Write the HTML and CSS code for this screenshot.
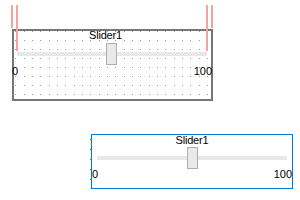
FILE: index.html
```html
<!DOCTYPE html>
<html lang="en">
<head>
    <meta charset="UTF-8">
    <meta name="viewport" content="width=device-width, initial-scale=1.0">
    <title>Slider Designer</title>
    <link rel="stylesheet" href="styles.css">
</head>
<body>
    <div class="surface">
        <!-- snap lines shown while dragging the slider -->
        <span class="snapline snapline-short snap-left-outer"></span>
        <span class="snapline snap-left-inner"></span>
        <span class="snapline snap-right-inner"></span>
        <span class="snapline snapline-short snap-right-outer"></span>

        <div class="slider slider-design">
            <div class="slider-title">Slider1</div>
            <div class="slider-rail">
                <div class="slider-track"></div>
                <div class="slider-thumb"></div>
            </div>
            <div class="slider-labels">
                <span>0</span>
                <span>100</span>
            </div>
        </div>

        <div class="slider slider-preview">
            <div class="slider-title">Slider1</div>
            <div class="slider-rail">
                <div class="slider-track"></div>
                <div class="slider-thumb"></div>
            </div>
            <div class="slider-labels">
                <span>0</span>
                <span>100</span>
            </div>
        </div>
    </div>
</body>
</html>
```

FILE: styles.css
```css
body {
    margin: 0;
    background-color: #ffffff;
    font-family: 'Liberation Sans', Arial, sans-serif;
    color: #000000;
}
.surface {
    position: relative;
    width: 300px;
    height: 200px;
    padding-top: 29px;
    box-sizing: border-box;
}
.snapline {
    position: absolute;
    top: 5px;
    width: 2px;
    height: 46px;
    background-color: #f4a3a3;
    z-index: 2;
}
.snapline-short {
    height: 23px;
}
.snap-left-outer { left: 11px; }
.snap-left-inner { left: 16px; }
.snap-right-inner { left: 206px; }
.snap-right-outer { left: 211px; }

.slider {
    position: relative;
    box-sizing: border-box;
    font-size: 11px;
}
.slider-title {
    line-height: 12px;
    text-align: center;
    letter-spacing: -0.2px;
}
.slider-rail {
    position: relative;
    height: 22px;
}
.slider-track {
    position: absolute;
    top: 9px;
    left: 0;
    right: 0;
    height: 4px;
    background-color: #e6e9e8;
}
.slider-thumb {
    position: absolute;
    top: 0;
    left: calc(50% - 5px);
    width: 11px;
    height: 22px;
    box-sizing: border-box;
    background-color: #e9e9e9;
    border: 1px solid #adadad;
}
.slider-labels {
    display: flex;
    justify-content: space-between;
    line-height: 12px;
}

/* slider as drawn on the design surface */
.slider-design {
    width: 201px;
    height: 72px;
    margin-left: 12px;
    border: 2px solid #767676;
    background-color: #9a9a9a;
    background-image:
        linear-gradient(90deg, transparent 1px, #fff 1px 8px, transparent 8px 9px, #fff 9px 16px, transparent 16px 17px, #fff 17px),
        linear-gradient(transparent 1px, #fff 1px);
    background-size: 25px 100%, 100% 9px;
    background-position: 10px 0, 0 0;
}
.slider-design .slider-title {
    margin-top: -2px;
    padding-right: 14px;
}
.slider-design .slider-rail {
    margin: 2px 4px 0 3px;
}
.slider-design .slider-thumb {
    left: calc(50% - 6px);
}
.slider-design .slider-labels {
    margin: 0 -1px 0 -2px;
}

/* selected slider preview */
.slider-preview {
    width: 202px;
    height: 55px;
    margin: 33px 0 0 91px;
    border: 1px solid #0078d7;
}
.slider-preview::before {
    content: '';
    position: absolute;
    left: -2px;
    top: 4px;
    width: 1px;
    height: 41px;
    background-image: repeating-linear-gradient(#6b6b6b 0 1px, transparent 1px 10px);
}
.slider-preview .slider-title {
    margin-top: -1px;
}
.slider-preview .slider-rail {
    margin: 1px 5px 0 5px;
}
.slider-preview .slider-labels {
    margin-top: -1px;
}
```
